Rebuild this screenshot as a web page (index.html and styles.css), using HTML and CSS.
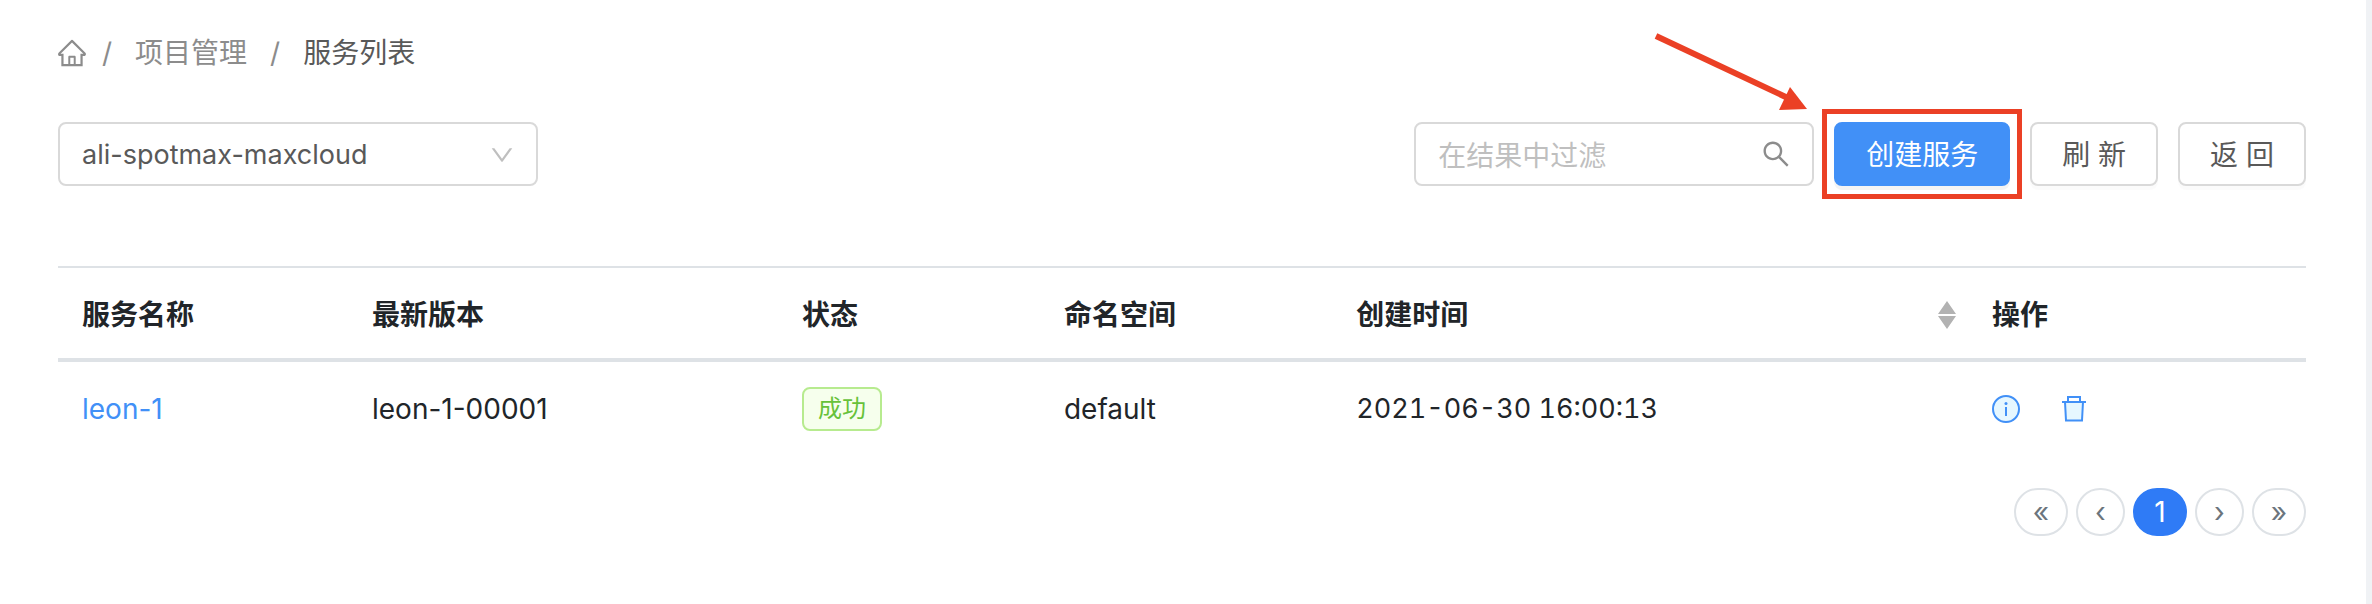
FILE: index.html
```html
<!DOCTYPE html>
<html lang="zh-CN">
<head>
<meta charset="utf-8">
<title>服务列表</title>
<link rel="stylesheet" href="styles.css">
</head>
<body>
<main class="page">
  <nav class="breadcrumb" aria-label="breadcrumb">
    <a class="crumb home" href="#" aria-label="首页"><svg class="home-icon" viewBox="58 60 908 908"><path d="M946.500 505L560.100 118.800l-25.900-25.900a31.500 31.500 0 0 0-44.400 0L77.500 505a63.900 63.900 0 0 0-18.800 46c.4 35.200 29.700 63.300 64.900 63.300h42.500V940h691.800V614.300h43.400c17.100 0 33.200-6.700 45.300-18.800a63.600 63.600 0 0 0 18.700-45.300c0-17-6.700-33.100-18.800-45.200zM568 868H456V664h112v204zm217.900-325.700V868H632V640c0-22.100-17.900-40-40-40H432c-22.100 0-40 17.900-40 40v228H238.100V542.300h-96l370-369.700 23.100 23.100L882 542.300h-96.100z"/></svg></a>
    <span class="sep">/</span>
    <a class="crumb" href="#">项目管理</a>
    <span class="sep">/</span>
    <span class="crumb current">服务列表</span>
  </nav>

  <div class="toolbar">
    <div class="select-box">
      <select class="select" aria-label="项目"><option>ali-spotmax-maxcloud</option></select>
      <svg class="select-arrow" viewBox="64 64 896 896"><path d="M884 256h-75c-5.100 0-9.900 2.500-12.900 6.600L512 654.200 227.900 262.600c-3-4.100-7.800-6.600-12.900-6.600h-75c-6.500 0-10.300 7.400-6.500 12.700l352.600 486.100c12.800 17.600 39 17.600 51.700 0l352.600-486.100c3.900-5.300.1-12.700-6.400-12.700z"/></svg>
    </div>
    <div class="actions">
      <div class="search-box">
        <input class="search" type="text" placeholder="在结果中过滤" aria-label="在结果中过滤">
        <svg class="search-icon" viewBox="64 64 896 896"><path d="M909.600 854.500L649.900 594.800C690.200 542.700 712 479 712 412c0-80.200-31.300-155.400-87.900-212.100-56.600-56.700-132-87.900-212.100-87.900s-155.500 31.300-212.100 87.900C143.200 256.500 112 331.800 112 412c0 80.100 31.300 155.500 87.900 212.100C256.500 680.800 331.800 712 412 712c67 0 130.600-21.800 182.700-62l259.700 259.600a8.200 8.200 0 0 0 11.600 0l43.600-43.500a8.200 8.200 0 0 0 0-11.600zM570.400 570.400C528 612.700 471.800 636 412 636s-116-23.300-158.400-65.600C211.300 528 188 471.800 188 412s23.300-116.100 65.600-158.400C296 211.300 352.200 188 412 188s116.100 23.200 158.400 65.600S636 352.200 636 412s-23.300 116.100-65.600 158.400z"/></svg>
      </div>
      <div class="callout">
        <button class="btn primary" type="button">创建服务</button>
        <svg class="callout-arrow" viewBox="0 0 156 80"><path class="shaft" d="M2 8 136 71"/><path d="M136 59 153 81 125 82z"/></svg>
      </div>
      <button class="btn" type="button">刷 新</button>
      <button class="btn" type="button">返 回</button>
    </div>
  </div>

  <table class="table">
    <thead>
      <tr>
        <th class="col-name">服务名称</th>
        <th class="col-version">最新版本</th>
        <th class="col-status">状态</th>
        <th class="col-namespace">命名空间</th>
        <th class="col-created"><div class="sortable">创建时间<svg class="sort-icon" viewBox="0 0 18 28"><path d="M9 0 18 13H0zM9 28 18 15H0z"/></svg></div></th>
        <th class="col-actions">操作</th>
      </tr>
    </thead>
    <tbody>
      <tr>
        <td><a class="link" href="#">leon-1</a></td>
        <td>leon-1-00001</td>
        <td><span class="tag">成功</span></td>
        <td>default</td>
        <td class="date">2021-06-30 16:00:13</td>
        <td>
          <div class="row-actions">
            <button class="icon-btn" type="button" aria-label="详情"><svg viewBox="0 0 28 28"><circle class="duo" cx="14" cy="14" r="13"/><circle class="solid" cx="14" cy="8.500" r="1.500"/><path class="duo" d="M14 12v9"/></svg></button>
            <button class="icon-btn" type="button" aria-label="删除"><svg viewBox="0 0 28 28"><path class="duo" d="M5 7l1 18.500h16L23 7"/><path class="line" d="M2 7h24M8 7V2h12v5"/></svg></button>
          </div>
        </td>
      </tr>
    </tbody>
  </table>

  <nav class="pagination" aria-label="分页">
    <button class="page-btn wide" type="button">«</button>
    <button class="page-btn" type="button">‹</button>
    <button class="page-btn wide active" type="button">1</button>
    <button class="page-btn" type="button">›</button>
    <button class="page-btn wide" type="button">»</button>
  </nav>
</main>
</body>
</html>
```
FILE: styles.css
```css
* { box-sizing: border-box; }

body {
  margin: 0;
  background: #fff;
  color: #212529;
  font: 28px/44px Inter, "Noto Sans CJK SC", sans-serif;
}

button, input, select { font: inherit; color: inherit; }
svg { display: block; fill: currentColor; }

.page {
  min-height: 100vh;
  padding: 31px 60px 0 58px;
  border-right: 6px solid #f0f2f5;
}

.breadcrumb {
  display: flex;
  align-items: center;
  color: #8c8c8c;
}
.crumb { color: inherit; text-decoration: none; }
.current { color: #595959; }
.home-icon { width: 28px; height: 28px; }
.sep { margin: 0 23px; }
.home + .sep { margin-left: 16px; }

.toolbar {
  display: flex;
  justify-content: space-between;
  margin-top: 47px;
  color: #595959;
}
.select-box, .search-box { position: relative; }
.select-box { width: 480px; }
.search-box { width: 400px; }
.select, .search {
  display: block;
  width: 100%;
  height: 64px;
  padding: 2px 60px 0 22px;
  border: 2px solid #d9d9d9;
  border-radius: 8px;
  background: #fff;
  appearance: none;
}
.select { font-size: 27px; }
.search { padding-top: 4px; }
.search::placeholder { color: #bfbfbf; opacity: 1; }
.select-arrow, .search-icon { position: absolute; }
.select-arrow { top: 21px; right: 24px; width: 24px; height: 24px; color: #bfbfbf; }
.search-icon { top: 18px; right: 24px; width: 28px; height: 28px; color: #8c8c8c; }

.actions { display: flex; gap: 20px; }
.btn {
  height: 64px;
  padding: 1px 30px 0;
  border: 2px solid #d9d9d9;
  border-radius: 8px;
  background: #fff;
  box-shadow: 0 4px 0 rgba(0, 0, 0, .015);
  white-space: nowrap;
}
.primary {
  border-color: #4190f7;
  background: #4190f7;
  box-shadow: 0 4px 0 rgba(0, 0, 0, .045);
  color: #fff;
}
.callout { position: relative; }
.callout::after {
  content: "";
  position: absolute;
  inset: -13px -12px;
  border: 5px solid #eb4025;
  pointer-events: none;
}
.callout-arrow {
  position: absolute;
  right: 100%;
  bottom: 100%;
  width: 156px;
  height: 80px;
  margin: 0 24px 14px 0;
  overflow: visible;
  color: #eb4025;
}
.shaft { fill: none; stroke: currentColor; stroke-width: 6; }

.table {
  width: 100%;
  margin-top: 80px;
  border-top: 2px solid #dee2e6;
  border-spacing: 0;
  table-layout: fixed;
}
th, td { padding: 25px 24px 21px; text-align: left; white-space: nowrap; }
th { border-bottom: 4px solid #dee2e6; font-weight: 600; }
.col-name { width: 12.9%; }
.col-version { width: 19.13%; }
.col-status { width: 11.65%; }
.col-namespace { width: 13%; }
.col-created { width: 28.29%; padding-right: 12px; }
.date { font-size: 27px; font-variant-numeric: tabular-nums; }
.sortable { display: flex; align-items: center; justify-content: space-between; }
.sort-icon { width: 18px; height: 28px; color: #b2b2b2; }
.link { color: #4190f7; text-decoration: none; }
.tag {
  display: block;
  width: fit-content;
  padding: 0 14px;
  border: 2px solid #b7eb8f;
  border-radius: 8px;
  background: #f6ffed;
  color: #67c23a;
  font-size: 24px;
  line-height: 40px;
}
.row-actions { display: flex; align-items: center; gap: 40px; }
.icon-btn { padding: 0; border: 0; background: none; color: #4190f7; }
.icon-btn svg { width: 28px; height: 28px; }
.duo { fill: #e6f7ff; stroke: currentColor; stroke-width: 2; }
.line { fill: none; stroke: currentColor; stroke-width: 2; }
.solid { fill: currentColor; }

.pagination {
  display: flex;
  justify-content: flex-end;
  gap: 8px;
  margin-top: 36px;
}
.page-btn {
  min-width: 49px;
  height: 48px;
  padding: 0 12px;
  border: 2px solid #dee2e6;
  border-radius: 24px;
  background: #fff;
  color: #6c757d;
  line-height: 40px;
}
.wide { min-width: 54px; }
.active { border-color: #2f7bf6; background: #2f7bf6; color: #fff; }
```
